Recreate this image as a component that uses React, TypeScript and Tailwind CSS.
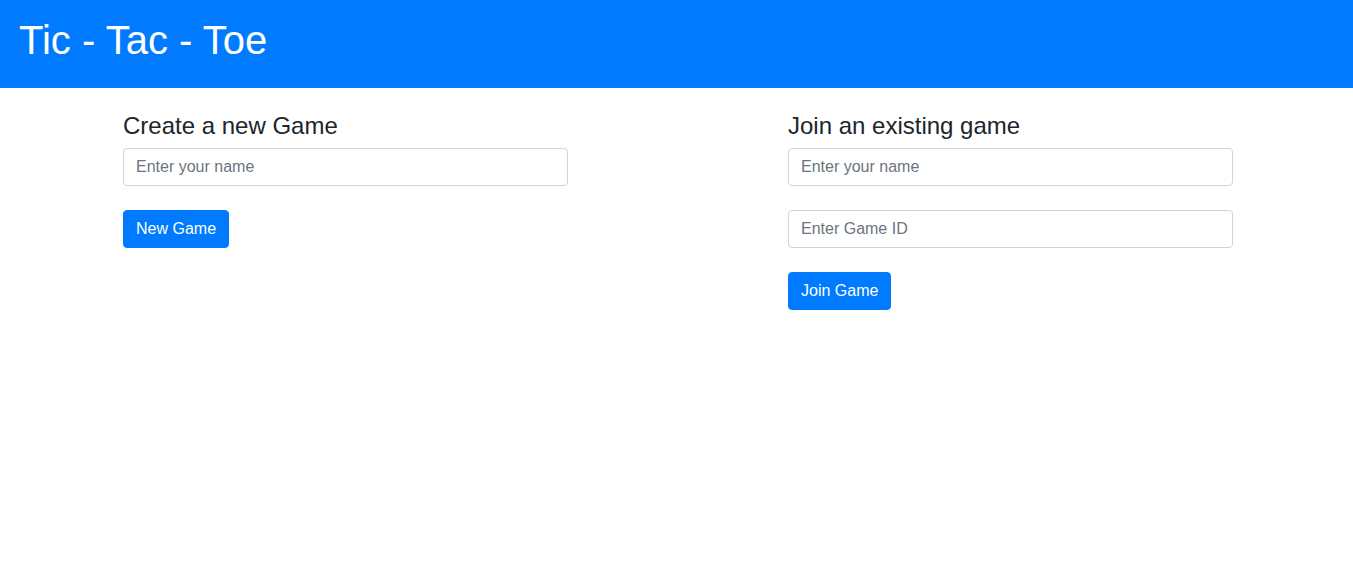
import React from "react";

const font = { fontFamily: '"Liberation Sans", Arial, sans-serif' };

function Input({ placeholder }: { placeholder: string }) {
  return (
    <input
      type="text"
      placeholder={placeholder}
      className="block w-full h-[38px] px-3 py-[6px] text-[16px] leading-6 text-[#495057] bg-white border border-[#ced4da] rounded-[4px] placeholder:text-[#6c757d] outline-none"
    />
  );
}

function Button({ children }: { children: React.ReactNode }) {
  return (
    <button className="h-[38px] px-3 py-[6px] text-[16px] leading-6 text-white bg-[#007bff] border border-[#007bff] rounded-[4px]">
      {children}
    </button>
  );
}

export default function App() {
  return (
    <div className="min-h-[573px] bg-white text-[#212529]" style={font}>
      <header className="bg-[#007bff] h-[88px] pt-4 pl-[19px]">
        <h1 className="text-[40px] leading-[48px] text-white font-normal">Tic - Tac - Toe</h1>
      </header>
      <main className="flex pl-[123px] pt-[23px] gap-[220px]">
        <section className="w-[445px]">
          <h4 className="text-[24px] leading-[29px] font-normal mb-2">Create a new Game</h4>
          <div className="mb-6">
            <Input placeholder="Enter your name" />
          </div>
          <Button>New Game</Button>
        </section>
        <section className="w-[445px]">
          <h4 className="text-[24px] leading-[29px] font-normal mb-2">Join an existing game</h4>
          <div className="mb-6">
            <Input placeholder="Enter your name" />
          </div>
          <div className="mb-6">
            <Input placeholder="Enter Game ID" />
          </div>
          <Button>Join Game</Button>
        </section>
      </main>
    </div>
  );
}
